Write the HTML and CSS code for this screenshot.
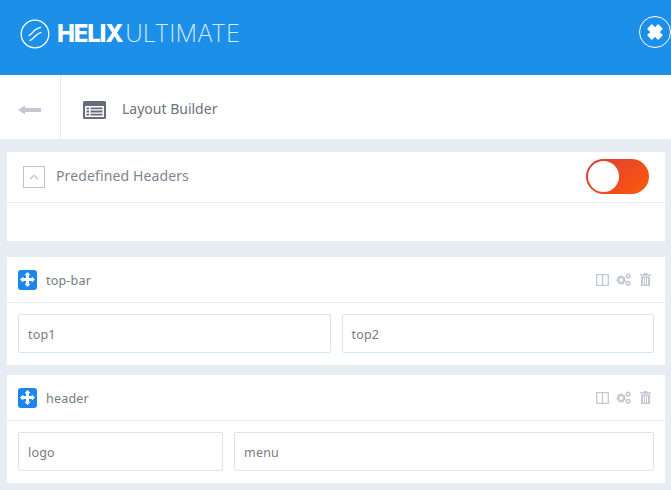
FILE: index.html
```html
<!DOCTYPE html>
<html lang="en">
<head>
<meta charset="utf-8">
<title>Helix Ultimate</title>
<link rel="stylesheet" href="styles.css">
</head>
<body>
<header class="topbar">
  <div class="brand">
    <svg class="brand-mark" width="30" height="30" viewBox="0 0 30 30" fill="none" stroke="#fff"><circle cx="15" cy="15" r="13.8" stroke-width="1.3"/><path d="M9 16.500C12 15 13 12.500 15 11C16.800 9.700 18.500 8.800 20.500 8.300" stroke-width="1.300" stroke-linecap="round"/><path d="M10 21.500C13 20 14.500 17.500 16.500 16C18 14.800 19.500 14 21 13.500" stroke-width="1.300" stroke-linecap="round"/></svg>
    <span class="brand-name"><b>HELIX</b><span class="brand-light">ULTIMATE</span></span>
  </div>
  <button class="close-btn" aria-label="Close">
    <svg width="20" height="20" viewBox="0 0 16 16"><path d="M2.500 5.500L5.500 2.500L8 5L10.500 2.500L13.500 5.500L11 8L13.500 10.500L10.500 13.500L8 11L5.500 13.500L2.500 10.500L5 8Z" fill="#fff" stroke="#fff" stroke-width="1.200" stroke-linejoin="round"/></svg>
  </button>
</header>
<nav class="subbar">
  <div class="back">
    <svg width="23" height="10" viewBox="0 0 23 10"><path d="M0 5L7 0.500V3H23V7H7V9.500Z" fill="#c3c8d2"/></svg>
  </div>
  <div class="subtitle">
    <svg class="subtitle-icon" width="23" height="18" viewBox="0 0 23 18"><path fill-rule="evenodd" d="M1.500 0H21.500A1.500 1.500 0 0 1 23 1.500V16.500A1.500 1.500 0 0 1 21.500 18H1.500A1.500 1.500 0 0 1 0 16.500V1.500A1.500 1.500 0 0 1 1.500 0ZM2 5V16H21V5ZM3.500 6.500H6V8.300H3.500ZM7.500 6.500H19.500V8.300H7.500ZM3.500 9.600H6V11.400H3.500ZM7.500 9.600H19.500V11.400H7.500ZM3.500 12.700H6V14.500H3.500ZM7.500 12.700H19.500V14.500H7.500Z" fill="#676c78"/></svg>
    <span>Layout Builder</span>
  </div>
</nav>
<main class="content">
  <section class="panel predefined">
    <div class="panel-head">
      <span class="collapse"><svg width="10" height="6" viewBox="0 0 10 6" fill="none"><path d="M1 5L5 1.300L9 5" stroke="#bcc3cf" stroke-width="1.300"/></svg></span>
      <span class="panel-title">Predefined Headers</span>
      <span class="toggle"><span class="knob"></span></span>
    </div>
    <div class="panel-empty"></div>
  </section>

  <section class="panel row">
    <div class="row-head">
      <span class="move"><svg width="15" height="15" viewBox="0 0 15 15"><path d="M7.500 0L10.500 3.200H9V6H11.800V4.500L15 7.500L11.800 10.500V9H9V11.800H10.500L7.500 15L4.500 11.800H6V9H3.200V10.500L0 7.500L3.200 4.500V6H6V3.200H4.500Z" fill="#fff"/></svg></span>
      <span class="row-name">top-bar</span>
      <span class="row-tools">
        <svg width="13" height="12" viewBox="0 0 13 12" fill="none"><path d="M.7 .7H12.300V11.300H.7ZM6.500 .7V11.300" stroke="#c3c9d4" stroke-width="1.300"/></svg>
        <svg width="15" height="13" viewBox="0 0 15 13"><circle cx="5.200" cy="7" r="3.300" fill="none" stroke="#c3c9d4" stroke-width="2.800" stroke-dasharray="2 .9"/><circle cx="5.200" cy="7" r="2.800" fill="none" stroke="#c3c9d4" stroke-width="1.800"/><circle cx="12.200" cy="3" r="1.800" fill="none" stroke="#c3c9d4" stroke-width="1.500"/><circle cx="12.200" cy="10.200" r="1.800" fill="none" stroke="#c3c9d4" stroke-width="1.500"/></svg>
        <svg class="trash" width="11" height="13" viewBox="0 0 11 13"><path fill-rule="evenodd" d="M4 0H7L7.600 1.200H11V2.800H0V1.200H3.400ZM1 3.500H10V13H1ZM3 5V11.500H4V5ZM5 5V11.500H6V5ZM7 5V11.500H8V5Z" fill="#c3c9d4"/></svg>
      </span>
    </div>
    <div class="row-cells">
      <div class="cell half">top1</div>
      <div class="cell half">top2</div>
    </div>
  </section>

  <section class="panel row">
    <div class="row-head">
      <span class="move"><svg width="15" height="15" viewBox="0 0 15 15"><path d="M7.500 0L10.500 3.200H9V6H11.800V4.500L15 7.500L11.800 10.500V9H9V11.800H10.500L7.500 15L4.500 11.800H6V9H3.200V10.500L0 7.500L3.200 4.500V6H6V3.200H4.500Z" fill="#fff"/></svg></span>
      <span class="row-name">header</span>
      <span class="row-tools">
        <svg width="13" height="12" viewBox="0 0 13 12" fill="none"><path d="M.7 .7H12.300V11.300H.7ZM6.500 .7V11.300" stroke="#c3c9d4" stroke-width="1.300"/></svg>
        <svg width="15" height="13" viewBox="0 0 15 13"><circle cx="5.200" cy="7" r="3.300" fill="none" stroke="#c3c9d4" stroke-width="2.800" stroke-dasharray="2 .9"/><circle cx="5.200" cy="7" r="2.800" fill="none" stroke="#c3c9d4" stroke-width="1.800"/><circle cx="12.200" cy="3" r="1.800" fill="none" stroke="#c3c9d4" stroke-width="1.500"/><circle cx="12.200" cy="10.200" r="1.800" fill="none" stroke="#c3c9d4" stroke-width="1.500"/></svg>
        <svg class="trash" width="11" height="13" viewBox="0 0 11 13"><path fill-rule="evenodd" d="M4 0H7L7.600 1.200H11V2.800H0V1.200H3.400ZM1 3.500H10V13H1ZM3 5V11.500H4V5ZM5 5V11.500H6V5ZM7 5V11.500H8V5Z" fill="#c3c9d4"/></svg>
      </span>
    </div>
    <div class="row-cells">
      <div class="cell logo-cell">logo</div>
      <div class="cell menu-cell">menu</div>
    </div>
  </section>
</main>
</body>
</html>
```
FILE: styles.css
```css
* { box-sizing: border-box; }
html, body { margin: 0; height: 100%; }
body {
  width: 671px;
  height: 490px;
  overflow: hidden;
  background: #e8edf4;
  font-family: "Noto Sans", Roboto, sans-serif;
  color: #6b6f7a;
}
.topbar {
  height: 75px;
  background: #1c90e8;
  display: flex;
  align-items: center;
  justify-content: space-between;
  padding: 0 0 8px 20px;
}
.brand { display: flex; align-items: center; gap: 7px; }
.brand-mark { display: block; }
.brand-name {
  font-family: Inter, sans-serif;
  font-size: 24px;
  line-height: 26px;
  color: #fff;
  white-space: nowrap;
}
.brand-name b { font-weight: 800; letter-spacing: -1.2px; }
.brand-light { font-weight: 200; margin-left: 3px; letter-spacing: 0.1px; opacity: 0.85; }
.close-btn {
  width: 32px;
  height: 32px;
  margin-top: -3px;
  padding: 0;
  background: transparent;
  border: 1.300px solid #fff;
  border-radius: 50%;
  display: flex;
  align-items: center;
  justify-content: center;
}
.subbar {
  height: 64px;
  background: #fff;
  display: flex;
  align-items: stretch;
}
.back {
  width: 61px;
  border-right: 1px solid #e8edf4;
  display: flex;
  align-items: center;
  padding: 6px 0 0 18px;
}
.subtitle {
  display: flex;
  align-items: center;
  gap: 16px;
  padding-left: 22px;
  padding-top: 2px;
  font-size: 14px;
  color: #6d727e;
}
.subtitle-icon { margin-top: 4px; }
.content {
  padding: 13px 6px 0 7px;
  display: flex;
  flex-direction: column;
}
.panel { background: #fff; }
.predefined { margin-bottom: 16px; }
.panel-head {
  height: 51px;
  border-bottom: 1px solid #e8edf4;
  display: flex;
  align-items: center;
  padding: 0 16px;
}
.collapse {
  width: 22px;
  height: 22px;
  border: 1px solid #bcc3cf;
  display: flex;
  align-items: center;
  justify-content: center;
}
.panel-title {
  margin: 0 0 4px 11px;
  font-size: 14px;
  letter-spacing: 0.12px;
  color: #7f848f;
}
.toggle {
  margin-left: auto;
  width: 63px;
  height: 35px;
  border-radius: 18px;
  background: linear-gradient(135deg, #d93a3a, #ff5a0a);
  padding: 2px;
  display: flex;
  position: relative;
  top: -1px;
}
.knob {
  width: 31px;
  height: 31px;
  border-radius: 50%;
  background: #fff;
}
.panel-empty { height: 38px; }
.row { padding-bottom: 12px; margin-bottom: 10px; }
.row-head {
  height: 46px;
  border-bottom: 1px solid #e8edf4;
  display: flex;
  align-items: center;
  padding: 2px 14px 0 11px;
}
.move {
  width: 19px;
  height: 20px;
  background: #1c86ee;
  border-radius: 3px;
  display: flex;
  align-items: center;
  justify-content: center;
  position: relative;
  top: -1px;
}
.row-name {
  margin-left: 9px;
  font-size: 12.500px;
  letter-spacing: 0.2px;
  color: #767b86;
}
.row-tools {
  margin-left: auto;
  display: flex;
  align-items: center;
  gap: 7px;
  position: relative;
  top: -1px;
}
.trash { margin-left: 2px; }
.row-cells {
  display: flex;
  gap: 11px;
  padding: 11px 11px 0;
}
.cell {
  height: 39px;
  border: 1px solid #dfe3eb;
  border-radius: 2px;
  padding: 1px 0 0 9px;
  display: flex;
  align-items: center;
  font-size: 12.500px;
  letter-spacing: 0.2px;
  color: #767b86;
}
.half { flex: 1 1 0; }
.logo-cell { width: 205px; }
.menu-cell { flex: 1 1 0; }
```
